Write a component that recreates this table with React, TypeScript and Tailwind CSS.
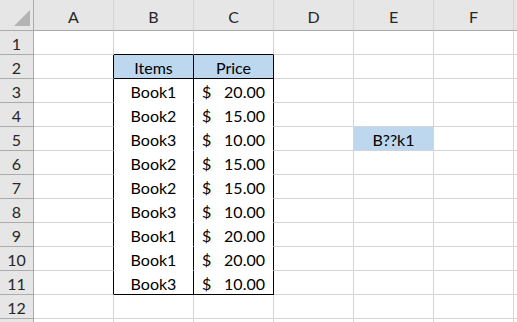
import React from "react";

const cols = ["A", "B", "C", "D", "E", "F", ""];
type Row = { b?: string; c?: string; e?: string; header?: boolean };
const rows: Row[] = [
  {},
  { b: "Items", c: "Price", header: true },
  { b: "Book1", c: "20.00" },
  { b: "Book2", c: "15.00" },
  { b: "Book3", c: "10.00", e: "B??k1" },
  { b: "Book2", c: "15.00" },
  { b: "Book2", c: "15.00" },
  { b: "Book3", c: "10.00" },
  { b: "Book1", c: "20.00" },
  { b: "Book1", c: "20.00" },
  { b: "Book3", c: "10.00" },
  {},
  {},
];

export default function App() {
  const font = { fontFamily: "Lato, 'Noto Sans', sans-serif" };
  return (
    <div
      className="w-[517px] h-[322px] overflow-hidden bg-white text-[16px] text-black"
      style={font}
    >
      <div className="grid grid-cols-[34px_repeat(6,80px)_80px] grid-rows-[31px_repeat(13,24px)]">
        {/* corner */}
        <div className="relative bg-[#e6e6e6] border-r border-b border-[#ababab]">
          <svg className="absolute left-[14px] top-[10px]" width="16" height="16" viewBox="0 0 16 16">
            <polygon points="16,0 16,16 0,16" fill="#b4b4b4" />
          </svg>
        </div>
        {cols.map((c, i) => (
          <div
            key={"h" + i}
            className="bg-[#e6e6e6] border-r border-b border-r-[#d4d4d4] border-b-[#ababab] flex items-center justify-center pt-[4px] text-[#262626]"
          >
            {c}
          </div>
        ))}
        {rows.map((r, ri) => {
          const n = ri + 1;
          const inTable = n >= 2 && n <= 11;
          const blackBottom = n === 1 || n === 2 || n === 11;
          return (
            <React.Fragment key={"r" + ri}>
              <div className="bg-[#e6e6e6] border-r border-b border-[#ababab] flex items-center justify-center pt-[3px] text-[#262626]">
                {n <= 12 ? n : null}
              </div>
              {/* A */}
              <div
                className={`border-b border-b-[#d4d4d4] border-r ${
                  inTable ? "border-r-black" : "border-r-[#d4d4d4]"
                }`}
              />
              {/* B */}
              <div
                className={`border-r flex items-center justify-center pt-[3px] ${
                  inTable ? "border-r-black" : "border-r-[#d4d4d4]"
                } ${
                  blackBottom
                    ? "border-b border-b-black"
                    : inTable
                    ? "border-b border-b-white"
                    : "border-b border-b-[#d4d4d4]"
                } ${r.header ? "bg-[#bdd7ee]" : ""}`}
              >
                {r.b}
              </div>
              {/* C */}
              <div
                className={`border-r flex items-center pt-[3px] ${
                  inTable ? "border-r-black" : "border-r-[#d4d4d4]"
                } ${
                  blackBottom
                    ? "border-b border-b-black"
                    : inTable
                    ? "border-b border-b-white"
                    : "border-b border-b-[#d4d4d4]"
                } ${r.header ? "bg-[#bdd7ee] justify-center" : "justify-between pl-[8px] pr-[8px]"}`}
              >
                {r.header ? (
                  r.c
                ) : r.c ? (
                  <>
                    <span>$</span>
                    <span>{r.c}</span>
                  </>
                ) : null}
              </div>
              {/* D */}
              <div className="border-r border-b border-[#d4d4d4]" />
              {/* E */}
              <div
                className={`border-r border-b border-[#d4d4d4] flex items-center justify-center pt-[3px] ${
                  r.e ? "bg-[#bdd7ee]" : ""
                }`}
              >
                {r.e}
              </div>
              {/* F */}
              <div className="border-r border-b border-[#d4d4d4]" />
              {/* G */}
              <div className="border-r border-b border-[#d4d4d4]" />
            </React.Fragment>
          );
        })}
      </div>
    </div>
  );
}
